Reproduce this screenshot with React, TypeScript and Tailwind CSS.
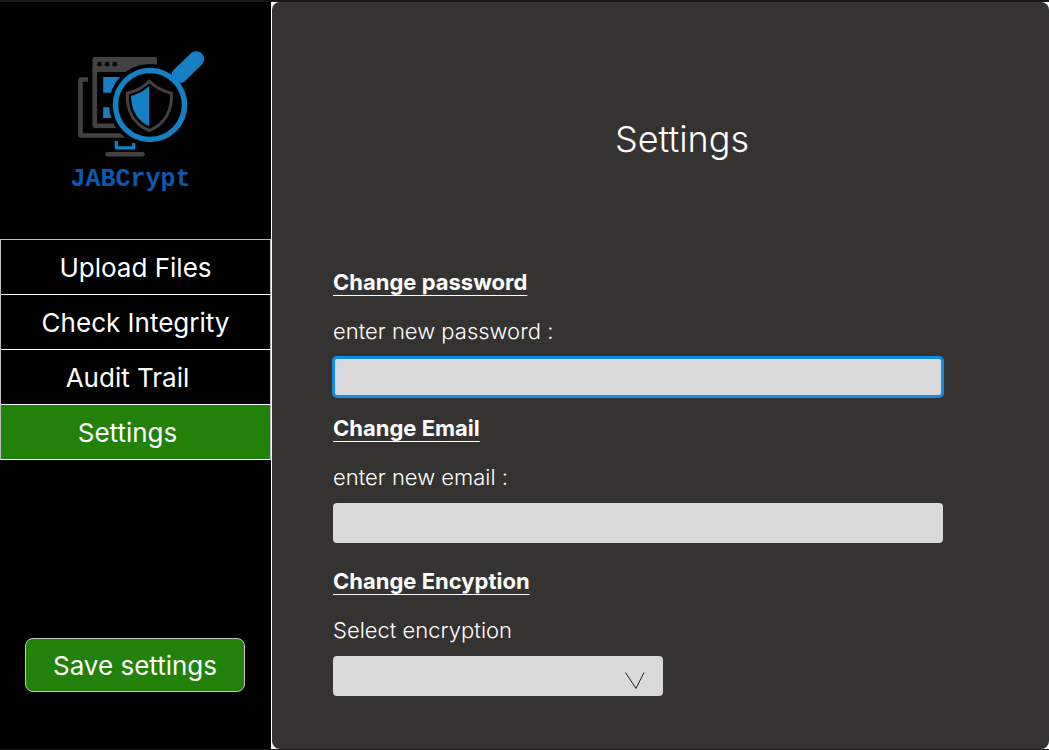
import { useId } from "react";
import type { ReactNode } from "react";

const navItems = [
  { label: "Upload Files", className: "bg-black" },
  { label: "Check Integrity", className: "bg-black" },
  { label: "Audit Trail", className: "bg-black pr-4" },
  { label: "Settings", className: "bg-[#218109] pr-4", current: true },
];

function Logo() {
  return (
    <div className="flex flex-col items-center">
      <svg viewBox="0 0 160 120" className="ml-[18px] h-[120px] w-[160px]" aria-hidden="true">
        <g fill="none" stroke="#424242" strokeWidth="4.6" strokeLinejoin="round">
          <path d="M28 39.5H20.5V95.5H66" />
          <path d="M34.8 28V85.7H59" />
        </g>
        <path d="M32.5 32V19a2 2 0 0 1 2-2H95a2 2 0 0 1 2 2V32Z" fill="#424242" />
        <g fill="#000">
          <circle cx="39.5" cy="24.2" r="2.4" />
          <circle cx="47.1" cy="24.2" r="2.4" />
          <circle cx="54.7" cy="24.2" r="2.4" />
        </g>
        <path d="M43.2 37H62V52.8H43.2ZM43.2 67.2H56V78H43.2Z" fill="#1780c4" />
        <circle cx="90" cy="65" r="41" fill="#000" />
        <path d="M56.3 101v6.8H73.7V103" fill="none" stroke="#1780c4" strokeWidth="3.2" strokeLinejoin="round" />
        <path d="M47.5 114.2H82.5" stroke="#424242" strokeWidth="4.6" strokeLinecap="round" />
        <circle cx="90" cy="65" r="34.5" fill="none" stroke="#1780c4" strokeWidth="5.5" />
        <path
          d="M131 13.2C134 10.5 139.5 10.5 142 13.8C145 17 144.7 21.5 142 24.5L125 41C123 43 120.5 43 119 42.5L118 45L110.5 37.5L112 35.5C111.5 33.5 112 31.5 113.5 30Z"
          fill="#1780c4"
        />
        <path
          d="M89.2 41.2C84 47 76 51 67.5 53.2C66.5 70 73 84 89.2 90.5C105.5 84 112.5 70 111.3 53.2C103 51 95 47 89.2 41.2Z"
          fill="none"
          stroke="#424242"
          strokeWidth="3"
        />
        <path d="M89.2 46C84 51 78 54 71 56C71 69 77 81 89.2 86.2Z" fill="#1780c4" />
      </svg>
      <span className="mt-1 font-['Liberation_Mono',monospace] text-[25px] leading-8 font-bold text-[#0b5aad]">
        JABCrypt
      </span>
    </div>
  );
}

function Section({
  title,
  label,
  children,
}: {
  title: string;
  label: string;
  children: (id: string) => ReactNode;
}) {
  const id = useId();
  return (
    <section className="flex flex-col items-start">
      <h2 className="text-[22px] leading-7 font-bold underline decoration-1 underline-offset-5 [text-decoration-skip-ink:none]">
        {title}
      </h2>
      <label htmlFor={id} className="mt-[21px] text-[22px] leading-7 font-[350]">
        {label}
      </label>
      {children(id)}
    </section>
  );
}

export default function App() {
  return (
    <div className="flex min-h-screen flex-col border-t-2 border-b border-[#171717] bg-black font-['Inter',sans-serif] text-white">
      <div className="flex grow">
        <aside className="flex w-[271px] shrink-0 flex-col">
          <div className="pt-[38px] pr-[10px]">
            <Logo />
          </div>
          <nav className="mt-[43px] border-x border-t border-[#bdbdbd]">
            {navItems.map((item) => (
              <a
                key={item.label}
                href="#"
                aria-current={item.current ? "page" : undefined}
                className={`flex h-[55px] items-center justify-center border-b border-white text-[26px] ${item.className}`}
              >
                {item.label}
              </a>
            ))}
          </nav>
          <div className="mt-auto px-[25px] pb-[57px]">
            <button
              type="submit"
              form="settings"
              className="h-[54px] w-[220px] rounded-lg border border-[#c4c4c4] bg-[#218109] text-[26px]"
            >
              Save settings
            </button>
          </div>
        </aside>
        <div className="flex grow bg-white pl-px">
          <main className="grow rounded-lg bg-[#353331] pr-[106px] pl-[61px]">
            <h1 className="pt-[114px] pl-[88px] text-center text-[36px] leading-[46px] font-[350]">
              Settings
            </h1>
            <form id="settings" className="mt-[106px] flex flex-col" onSubmit={(e) => e.preventDefault()}>
              <Section title="Change password" label="enter new password :">
                {(id) => (
                  <input
                    id={id}
                    type="password"
                    className="mt-3 h-10 w-full rounded bg-[#d9d9d9] px-3 text-black outline-3 -outline-offset-2 outline-[#0d8ce9]"
                  />
                )}
              </Section>
              <div className="mt-[17px]">
                <Section title="Change Email" label="enter new email :">
                  {(id) => (
                    <input id={id} type="email" className="mt-3 h-10 w-full rounded bg-[#d9d9d9] px-3 text-black" />
                  )}
                </Section>
              </div>
              <div className="mt-6">
                <Section title="Change Encyption" label="Select encryption">
                  {(id) => (
                    <div className="mt-3 grid w-[330px] items-center">
                      <select
                        id={id}
                        className="col-start-1 row-start-1 h-10 w-full appearance-none rounded bg-[#d9d9d9] px-3 text-black"
                      />
                      <svg
                        viewBox="0 0 20 17"
                        className="pointer-events-none col-start-1 row-start-1 mt-2 mr-[18px] h-[17px] w-5 justify-self-end"
                        aria-hidden="true"
                      >
                        <path d="M0.5 0.5 11 16.5 19 0.5" fill="none" stroke="#222" strokeWidth="1" />
                      </svg>
                    </div>
                  )}
                </Section>
              </div>
            </form>
          </main>
        </div>
      </div>
    </div>
  );
}
